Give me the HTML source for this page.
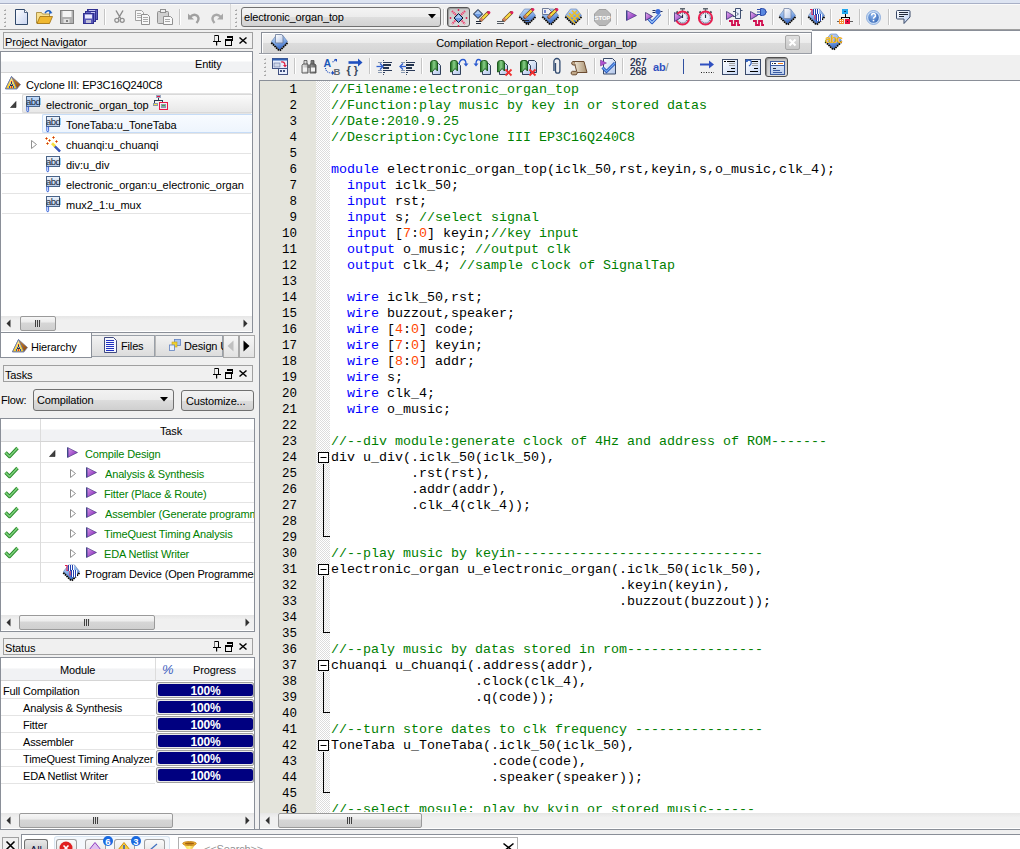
<!DOCTYPE html><html><head><meta charset="utf-8"><style>
*{margin:0;padding:0;box-sizing:border-box}
html,body{width:1020px;height:849px;overflow:hidden;background:#f0f0f0;font-family:"Liberation Sans",sans-serif;font-size:11px;color:#000}
.a{position:absolute}
.t{position:absolute;white-space:pre;line-height:13px;letter-spacing:-0.15px}
svg{position:absolute;overflow:visible}
.ptitle{position:absolute;background:#f0f0f0;border:1px solid #a0a0a0;height:17px}
.hdr{position:absolute;background:linear-gradient(#fff 0,#fff 45%,#f1f2f4 50%,#f1f2f4 100%);border-bottom:1px solid #d5d5d5}
.sep{position:absolute;height:1px;background:#e4e4e4}
.sb{position:absolute;background:linear-gradient(#e9e9e9,#f3f3f3)}
.thumb{position:absolute;border:1px solid #9a9a9a;border-radius:2px;background:linear-gradient(#f6f6f6,#ececec 40%,#d6d6d6 45%,#cfcfcf)}
pre{font-family:"Liberation Mono",monospace;font-size:13.33px;line-height:16px}
.c{color:#008000}.k{color:#0000ff}.n{color:#ff4500}
.g{color:#008000}
</style></head><body>
<div class="a" style="left:0px;top:0px;width:1020px;height:3px;background:#dde4f2"></div>
<div class="a" style="left:0px;top:3px;width:1020px;height:1px;background:#a8b0c6"></div>
<div class="a" style="left:0px;top:4px;width:1020px;height:1px;background:#fbfbfb"></div>
<div class="a" style="left:0px;top:29px;width:1020px;height:1px;background:#a0a0a0"></div>
<div class="ptitle" style="left:3px;top:32px;width:250px"></div>
<div class="t" style="left:5px;top:36px;">Project Navigator</div>
<svg style="left:213px;top:35px" width="8" height="11" viewBox="0 0 8 11"><path d="M1.5 0.5h4v6h-4z" fill="#f0f0f0" stroke="#000" stroke-width="1"/><path d="M1.5 0.5v6" stroke="#777"/><rect x="0" y="6" width="8" height="1" fill="#000"/><rect x="3" y="7" width="1.2" height="3.5" fill="#000"/></svg>
<svg style="left:225px;top:36px" width="8" height="10" viewBox="0 0 8 10"><rect x="2" y="0" width="6" height="2" fill="#000"/><rect x="7" y="2" width="1" height="3" fill="#000"/><rect x="6" y="4" width="2" height="1" fill="#000"/><rect x="0" y="3" width="7" height="2" fill="#000"/><rect x="0" y="5" width="1" height="4" fill="#000"/><rect x="6" y="5" width="1" height="4" fill="#000"/><rect x="0" y="9" width="7" height="1" fill="#000"/></svg>
<svg style="left:239px;top:37px" width="8" height="7" viewBox="0 0 8 7"><path d="M0.5 0.5l7 6M7.5 0.5l-7 6" stroke="#000" stroke-width="1.5"/></svg>
<div class="a" style="left:0px;top:51px;width:253px;height:282px;background:#fff;border-left:1px solid #8a8f98;border-top:1px solid #8a8f98;border-right:1px solid #8a8f98"></div>
<div class="hdr" style="left:1px;top:52px;width:251px;height:21px"></div>
<div class="t" style="left:195px;top:58px;">Entity</div>
<div class="sep" style="left:2px;top:93px;width:249px"></div>
<div class="sep" style="left:2px;top:113px;width:249px"></div>
<div class="sep" style="left:2px;top:133px;width:249px"></div>
<div class="sep" style="left:2px;top:153px;width:249px"></div>
<div class="sep" style="left:2px;top:173px;width:249px"></div>
<div class="sep" style="left:2px;top:193px;width:249px"></div>
<div class="sep" style="left:2px;top:213px;width:249px"></div>
<svg style="left:5px;top:76px" width="17" height="15" viewBox="0 0 17 15"><defs><linearGradient id="gdev2" x1="0" y1="0" x2="1" y2="1"><stop offset="0" stop-color="#f0a030"/><stop offset="1" stop-color="#804010"/></linearGradient><linearGradient id="gdev1" x1="0" y1="0" x2="0" y2="1"><stop offset="0" stop-color="#fff0a0"/><stop offset="1" stop-color="#f8c820"/></linearGradient></defs><path d="M6.5 0.5L15.5 8.5L12 12.8H0.5z" fill="url(#gdev2)" stroke="#6070a0" stroke-width="0.7"/><path d="M6.5 0.5L12 12.8H0.5z" fill="url(#gdev1)" stroke="#5a70b0" stroke-width="0.8"/><g shape-rendering="crispEdges"><rect x="6" y="5" width="1" height="1" fill="#e02030"/><rect x="6" y="6" width="1" height="2" fill="#203080"/><rect x="5" y="8" width="1" height="1" fill="#2050c0"/><rect x="7" y="8" width="1" height="1" fill="#2050c0"/><rect x="4" y="10" width="1" height="2" fill="#2050c0"/><rect x="6" y="10" width="1" height="2" fill="#e02030"/><rect x="8" y="10" width="1" height="2" fill="#2050c0"/><rect x="5" y="9" width="3" height="1" fill="#203060"/></g></svg>
<div class="t" style="left:26px;top:79px;">Cyclone III: EP3C16Q240C8</div>
<div class="a" style="left:22px;top:94px;width:230px;height:19px;background:linear-gradient(#fafafa,#e8e8e8);border:1px solid #d9d9d9;border-right:none;border-radius:2px 0 0 2px"></div>
<svg style="left:10px;top:101px" width="7" height="7" viewBox="0 0 7 7"><path d="M6 0.5L6 6.5L0.5 6.5z" fill="#404040" stroke="#202020" stroke-width="0.6"/></svg>
<svg style="left:26px;top:96px" width="15" height="17" viewBox="0 0 15 17"><defs><linearGradient id="ga1" x1="0" y1="0" x2="0" y2="1"><stop offset="0" stop-color="#c4dcfa"/><stop offset="1" stop-color="#98bcec"/></linearGradient></defs><rect x="0.5" y="0.5" width="13" height="10" fill="url(#ga1)" stroke="#4a6488"/><text x="0" y="9.2" font-family="Liberation Sans" font-size="9.5" fill="#1e2c40" letter-spacing="-0.5">abd</text><path d="M0.8 10.5v4.3l0.9 1.3l0.9-1.3v-4.3" fill="none" stroke="#2a5ad8" stroke-width="0.9"/></svg>
<div class="t" style="left:46px;top:99px;letter-spacing:0">electronic_organ_top</div>
<svg style="left:152px;top:94px" width="17" height="17" viewBox="0 0 17 17"><g shape-rendering="crispEdges"><rect x="4" y="1" width="5" height="3" fill="#9aa8c0"/><rect x="5" y="2" width="3" height="1" fill="#e81848"/><rect x="6" y="4" width="1" height="2" fill="#2a3a50"/><rect x="2" y="6" width="9" height="1" fill="#2a3a50"/><rect x="2" y="7" width="1" height="2" fill="#2a3a50"/><rect x="10" y="7" width="1" height="2" fill="#2a3a50"/><rect x="1" y="9" width="5" height="3" fill="#8a98b0"/><rect x="2" y="10" width="3" height="1" fill="#f8e040"/><rect x="7" y="8" width="9" height="1" fill="#e81848"/><rect x="7" y="15" width="9" height="1" fill="#e81848"/><rect x="7" y="8" width="1" height="8" fill="#e81848"/><rect x="15" y="8" width="1" height="8" fill="#e81848"/><rect x="9" y="10" width="5" height="4" fill="#8a98b0"/><rect x="10" y="11" width="3" height="1" fill="#40b040"/></g></svg>
<div class="a" style="left:42px;top:114px;width:210px;height:19px;background:linear-gradient(#f8fbff,#eef5fd);border:1px solid #c6dcf7;border-right:none;border-radius:2px 0 0 2px"></div>
<svg style="left:46px;top:116px" width="15" height="17" viewBox="0 0 15 17"><defs><linearGradient id="ga0" x1="0" y1="0" x2="0" y2="1"><stop offset="0" stop-color="#eef3fb"/><stop offset="1" stop-color="#b8cce8"/></linearGradient></defs><rect x="0.5" y="0.5" width="13" height="10" fill="url(#ga0)" stroke="#4a6488"/><text x="0" y="9.2" font-family="Liberation Sans" font-size="9.5" fill="#1e2c40" letter-spacing="-0.5">abd</text><path d="M0.8 10.5v4.3l0.9 1.3l0.9-1.3v-4.3" fill="none" stroke="#2a5ad8" stroke-width="0.9"/></svg>
<div class="t" style="left:66px;top:119px;letter-spacing:0">ToneTaba:u_ToneTaba</div>
<svg style="left:31px;top:140px" width="6" height="9" viewBox="0 0 6 9"><path d="M0.5 0.5L5.5 4.5L0.5 8.5z" fill="#fff" stroke="#909090" stroke-width="1"/></svg>
<svg style="left:45px;top:136px" width="17" height="17" viewBox="0 0 17 17"><path d="M9.5 10L15 15.5" stroke="#1a3aa8" stroke-width="2.4"/><path d="M9.5 10L15 15.5" stroke="#b8d0ff" stroke-width="0.8" stroke-dasharray="0.8 0.8"/><path d="M7 7.2L10 10.2" stroke="#f8e040" stroke-width="2.8"/><path d="M0.0 2.5h3M1.5 1.0v3" stroke="#f8a830" stroke-width="1"/><rect x="0.9" y="1.9" width="1.2" height="1.2" fill="#c01040"/><path d="M7.0 1.5h3M8.5 0.0v3" stroke="#f8a830" stroke-width="1"/><rect x="7.9" y="0.9" width="1.2" height="1.2" fill="#c01040"/><path d="M3.0 4.5h3M4.5 3.0v3" stroke="#f8a830" stroke-width="1"/><rect x="3.9" y="3.9" width="1.2" height="1.2" fill="#c01040"/><path d="M1.0 7.5h3M2.5 6.0v3" stroke="#f8a830" stroke-width="1"/><rect x="1.9" y="6.9" width="1.2" height="1.2" fill="#c01040"/><path d="M10.0 5.5h3M11.5 4.0v3" stroke="#f8a830" stroke-width="1"/><rect x="10.9" y="4.9" width="1.2" height="1.2" fill="#c01040"/></svg>
<div class="t" style="left:66px;top:139px;letter-spacing:0">chuanqi:u_chuanqi</div>
<svg style="left:46px;top:156px" width="15" height="17" viewBox="0 0 15 17"><defs><linearGradient id="ga0" x1="0" y1="0" x2="0" y2="1"><stop offset="0" stop-color="#eef3fb"/><stop offset="1" stop-color="#b8cce8"/></linearGradient></defs><rect x="0.5" y="0.5" width="13" height="10" fill="url(#ga0)" stroke="#4a6488"/><text x="0" y="9.2" font-family="Liberation Sans" font-size="9.5" fill="#1e2c40" letter-spacing="-0.5">abd</text><path d="M0.8 10.5v4.3l0.9 1.3l0.9-1.3v-4.3" fill="none" stroke="#2a5ad8" stroke-width="0.9"/></svg>
<div class="t" style="left:66px;top:159px;letter-spacing:0">div:u_div</div>
<svg style="left:46px;top:176px" width="15" height="17" viewBox="0 0 15 17"><defs><linearGradient id="ga0" x1="0" y1="0" x2="0" y2="1"><stop offset="0" stop-color="#eef3fb"/><stop offset="1" stop-color="#b8cce8"/></linearGradient></defs><rect x="0.5" y="0.5" width="13" height="10" fill="url(#ga0)" stroke="#4a6488"/><text x="0" y="9.2" font-family="Liberation Sans" font-size="9.5" fill="#1e2c40" letter-spacing="-0.5">abd</text><path d="M0.8 10.5v4.3l0.9 1.3l0.9-1.3v-4.3" fill="none" stroke="#2a5ad8" stroke-width="0.9"/></svg>
<div class="t" style="left:66px;top:179px;letter-spacing:0">electronic_organ:u_electronic_organ</div>
<svg style="left:46px;top:196px" width="15" height="17" viewBox="0 0 15 17"><defs><linearGradient id="ga0" x1="0" y1="0" x2="0" y2="1"><stop offset="0" stop-color="#eef3fb"/><stop offset="1" stop-color="#b8cce8"/></linearGradient></defs><rect x="0.5" y="0.5" width="13" height="10" fill="url(#ga0)" stroke="#4a6488"/><text x="0" y="9.2" font-family="Liberation Sans" font-size="9.5" fill="#1e2c40" letter-spacing="-0.5">abd</text><path d="M0.8 10.5v4.3l0.9 1.3l0.9-1.3v-4.3" fill="none" stroke="#2a5ad8" stroke-width="0.9"/></svg>
<div class="t" style="left:66px;top:199px;letter-spacing:0">mux2_1:u_mux</div>
<div class="a" style="left:1px;top:316px;width:251px;height:15px;background:linear-gradient(#e6e6e6,#f0f0f0 30%,#f0f0f0)"></div>
<svg style="left:6px;top:319px" width="5" height="9" viewBox="0 0 5 9"><path d="M4.5 0.5L0.5 4.5L4.5 8.5z" fill="#303030"/></svg>
<svg style="left:243px;top:319px" width="5" height="9" viewBox="0 0 5 9"><path d="M0.5 0.5L4.5 4.5L0.5 8.5z" fill="#303030"/></svg>
<div class="thumb" style="left:20px;top:316px;width:36px;height:15px"></div>
<svg style="left:34px;top:320px" width="8" height="7" viewBox="0 0 8 7"><g shape-rendering="crispEdges"><rect x="1" y="0" width="1" height="7" fill="#404040"/><rect x="3" y="0" width="1" height="7" fill="#404040"/><rect x="5" y="0" width="1" height="7" fill="#404040"/><rect x="2" y="0" width="1" height="7" fill="#d8d8d8"/><rect x="4" y="0" width="1" height="7" fill="#d8d8d8"/><rect x="6" y="0" width="1" height="7" fill="#d8d8d8"/></g></svg>
<div class="a" style="left:0px;top:332px;width:253px;height:1px;background:#8a8f98"></div>
<div class="a" style="left:0px;top:333px;width:92px;height:25px;background:#fff;border-left:1px solid #8a8f98;border-bottom:1px solid #8a8f98;border-right:1px solid #8a8f98"></div>
<svg style="left:12px;top:339px" width="17" height="15" viewBox="0 0 17 15"><defs><linearGradient id="gdev2" x1="0" y1="0" x2="1" y2="1"><stop offset="0" stop-color="#f0a030"/><stop offset="1" stop-color="#804010"/></linearGradient><linearGradient id="gdev1" x1="0" y1="0" x2="0" y2="1"><stop offset="0" stop-color="#fff0a0"/><stop offset="1" stop-color="#f8c820"/></linearGradient></defs><path d="M6.5 0.5L15.5 8.5L12 12.8H0.5z" fill="url(#gdev2)" stroke="#6070a0" stroke-width="0.7"/><path d="M6.5 0.5L12 12.8H0.5z" fill="url(#gdev1)" stroke="#5a70b0" stroke-width="0.8"/><g shape-rendering="crispEdges"><rect x="6" y="5" width="1" height="1" fill="#e02030"/><rect x="6" y="6" width="1" height="2" fill="#203080"/><rect x="5" y="8" width="1" height="1" fill="#2050c0"/><rect x="7" y="8" width="1" height="1" fill="#2050c0"/><rect x="4" y="10" width="1" height="2" fill="#2050c0"/><rect x="6" y="10" width="1" height="2" fill="#e02030"/><rect x="8" y="10" width="1" height="2" fill="#2050c0"/><rect x="5" y="9" width="3" height="1" fill="#203060"/></g></svg>
<div class="t" style="left:31px;top:341px;">Hierarchy</div>
<div class="a" style="left:92px;top:335px;width:63px;height:22px;background:linear-gradient(#f2f2f2,#dcdcdc);border:1px solid #9aa0a8;border-left:none"></div>
<svg style="left:104px;top:337px" width="13" height="16" viewBox="0 0 13 16"><path d="M0.5 0.5h9l3 3v12h-12z" fill="#f4f6ff" stroke="#404a80" stroke-width="1"/><g shape-rendering="crispEdges"><rect x="2" y="3" width="8" height="1" fill="#2030c0"/><rect x="2" y="5" width="8" height="1" fill="#2030c0"/><rect x="2" y="7" width="8" height="1" fill="#2030c0"/><rect x="2" y="9" width="8" height="1" fill="#2030c0"/><rect x="2" y="11" width="8" height="1" fill="#2030c0"/><rect x="2" y="13" width="8" height="1" fill="#2030c0"/></g></svg>
<div class="t" style="left:121px;top:340px;">Files</div>
<div class="a" style="left:155px;top:335px;width:68px;height:22px;background:linear-gradient(#f2f2f2,#dcdcdc);border:1px solid #9aa0a8;border-left:1px solid #b8b8b8;overflow:hidden"></div>
<svg style="left:169px;top:339px" width="12" height="12" viewBox="0 0 12 12"><rect x="5.5" y="0.5" width="6" height="6" fill="#a8c4f0" stroke="#6080c0" stroke-width="0.8"/><rect x="3" y="3" width="5" height="5" fill="#f0d030" stroke="#c0a020" stroke-width="0.6"/><rect x="0.5" y="6" width="5" height="5.5" fill="#e8f0fc" stroke="#6080c0" stroke-width="0.8"/></svg>
<div class="t" style="left:184px;top:340px;width:39px;overflow:hidden">Design Units</div>
<div class="a" style="left:223px;top:335px;width:16px;height:23px;background:linear-gradient(#f6f6f6,#e2e2e2);border:1px solid #a8a8a8"></div>
<svg style="left:227px;top:340px" width="7" height="12" viewBox="0 0 7 12"><path d="M6.5 0.5L0.5 6L6.5 11.5z" fill="#c0c0c0"/></svg>
<div class="a" style="left:239px;top:335px;width:16px;height:23px;background:linear-gradient(#f6f6f6,#e2e2e2);border:1px solid #a8a8a8"></div>
<svg style="left:243px;top:340px" width="7" height="12" viewBox="0 0 7 12"><path d="M0.5 0.5L6.5 6L0.5 11.5z" fill="#000"/></svg>
<div class="ptitle" style="left:3px;top:365px;width:250px"></div>
<div class="t" style="left:5px;top:369px;">Tasks</div>
<svg style="left:213px;top:368px" width="8" height="11" viewBox="0 0 8 11"><path d="M1.5 0.5h4v6h-4z" fill="#f0f0f0" stroke="#000" stroke-width="1"/><path d="M1.5 0.5v6" stroke="#777"/><rect x="0" y="6" width="8" height="1" fill="#000"/><rect x="3" y="7" width="1.2" height="3.5" fill="#000"/></svg>
<svg style="left:225px;top:369px" width="8" height="10" viewBox="0 0 8 10"><rect x="2" y="0" width="6" height="2" fill="#000"/><rect x="7" y="2" width="1" height="3" fill="#000"/><rect x="6" y="4" width="2" height="1" fill="#000"/><rect x="0" y="3" width="7" height="2" fill="#000"/><rect x="0" y="5" width="1" height="4" fill="#000"/><rect x="6" y="5" width="1" height="4" fill="#000"/><rect x="0" y="9" width="7" height="1" fill="#000"/></svg>
<svg style="left:239px;top:370px" width="8" height="7" viewBox="0 0 8 7"><path d="M0.5 0.5l7 6M7.5 0.5l-7 6" stroke="#000" stroke-width="1.5"/></svg>
<div class="t" style="left:1px;top:394px;">Flow:</div>
<div class="a" style="left:33px;top:389px;width:141px;height:22px;background:linear-gradient(#f2f2f2 0,#ebebeb 50%,#dddddd 51%,#cfcfcf);border:1px solid #707070;border-radius:3px"></div>
<div class="t" style="left:37px;top:394px;">Compilation</div>
<svg style="left:160px;top:397px" width="8" height="5" viewBox="0 0 8 5"><path d="M0 0h8L4 4.5z" fill="#000"/></svg>
<div class="a" style="left:181px;top:390px;width:73px;height:21px;background:linear-gradient(#f2f2f2 0,#ebebeb 50%,#dddddd 51%,#cfcfcf);border:1px solid #707070;border-radius:3px"></div>
<div class="t" style="left:186px;top:395px;">Customize...</div>
<div class="a" style="left:0px;top:418px;width:255px;height:214px;background:#fff;border:1px solid #8a8f98;border-bottom:none"></div>
<div class="hdr" style="left:1px;top:419px;width:253px;height:23px"></div>
<div class="a" style="left:40px;top:419px;width:1px;height:22px;background:#dcdcdc"></div>
<div class="t" style="left:160px;top:425px;">Task</div>
<div class="sep" style="left:1px;top:462px;width:253px"></div>
<div class="sep" style="left:1px;top:482px;width:253px"></div>
<div class="sep" style="left:1px;top:502px;width:253px"></div>
<div class="sep" style="left:1px;top:522px;width:253px"></div>
<div class="sep" style="left:1px;top:542px;width:253px"></div>
<div class="sep" style="left:1px;top:562px;width:253px"></div>
<div class="sep" style="left:1px;top:582px;width:253px"></div>
<div class="a" style="left:40px;top:442px;width:1px;height:140px;background:#dcdcdc"></div>
<svg style="left:4px;top:446px" width="15" height="13" viewBox="0 0 15 13"><path d="M1.5 6.5L5.5 10.5L13.5 2" fill="none" stroke="#2a8a2a" stroke-width="3.4" stroke-linejoin="round"/><path d="M1.5 6.5L5.5 10.5L13.5 2" fill="none" stroke="#7cd07c" stroke-width="1.6" stroke-linejoin="round"/></svg>
<svg style="left:49px;top:450px" width="7" height="7" viewBox="0 0 7 7"><path d="M6 0.5L6 6.5L0.5 6.5z" fill="#404040" stroke="#202020" stroke-width="0.6"/></svg>
<svg style="left:67px;top:447px" width="11" height="11" viewBox="0 0 11 11"><defs><linearGradient id="gpl" x1="0" y1="0" x2="1" y2="1"><stop offset="0" stop-color="#e0a0f0"/><stop offset="0.6" stop-color="#a050c8"/><stop offset="1" stop-color="#6020a0"/></linearGradient></defs><path d="M0.5 0.5L10.5 5.5L0.5 10.5z" fill="url(#gpl)" stroke="#40307a" stroke-width="0.6"/><path d="M0.8 0.8v9.5" stroke="#304080" stroke-width="1.2"/></svg>
<div class="t g" style="left:85px;top:448px;width:169px;overflow:hidden">Compile Design</div>
<svg style="left:4px;top:466px" width="15" height="13" viewBox="0 0 15 13"><path d="M1.5 6.5L5.5 10.5L13.5 2" fill="none" stroke="#2a8a2a" stroke-width="3.4" stroke-linejoin="round"/><path d="M1.5 6.5L5.5 10.5L13.5 2" fill="none" stroke="#7cd07c" stroke-width="1.6" stroke-linejoin="round"/></svg>
<svg style="left:70px;top:469px" width="6" height="9" viewBox="0 0 6 9"><path d="M0.5 0.5L5.5 4.5L0.5 8.5z" fill="#fff" stroke="#909090" stroke-width="1"/></svg>
<svg style="left:86px;top:467px" width="11" height="11" viewBox="0 0 11 11"><defs><linearGradient id="gpl" x1="0" y1="0" x2="1" y2="1"><stop offset="0" stop-color="#e0a0f0"/><stop offset="0.6" stop-color="#a050c8"/><stop offset="1" stop-color="#6020a0"/></linearGradient></defs><path d="M0.5 0.5L10.5 5.5L0.5 10.5z" fill="url(#gpl)" stroke="#40307a" stroke-width="0.6"/><path d="M0.8 0.8v9.5" stroke="#304080" stroke-width="1.2"/></svg>
<div class="t g" style="left:105px;top:468px;width:149px;overflow:hidden">Analysis &amp; Synthesis</div>
<svg style="left:4px;top:486px" width="15" height="13" viewBox="0 0 15 13"><path d="M1.5 6.5L5.5 10.5L13.5 2" fill="none" stroke="#2a8a2a" stroke-width="3.4" stroke-linejoin="round"/><path d="M1.5 6.5L5.5 10.5L13.5 2" fill="none" stroke="#7cd07c" stroke-width="1.6" stroke-linejoin="round"/></svg>
<svg style="left:70px;top:489px" width="6" height="9" viewBox="0 0 6 9"><path d="M0.5 0.5L5.5 4.5L0.5 8.5z" fill="#fff" stroke="#909090" stroke-width="1"/></svg>
<svg style="left:86px;top:487px" width="11" height="11" viewBox="0 0 11 11"><defs><linearGradient id="gpl" x1="0" y1="0" x2="1" y2="1"><stop offset="0" stop-color="#e0a0f0"/><stop offset="0.6" stop-color="#a050c8"/><stop offset="1" stop-color="#6020a0"/></linearGradient></defs><path d="M0.5 0.5L10.5 5.5L0.5 10.5z" fill="url(#gpl)" stroke="#40307a" stroke-width="0.6"/><path d="M0.8 0.8v9.5" stroke="#304080" stroke-width="1.2"/></svg>
<div class="t g" style="left:104px;top:488px;width:150px;overflow:hidden">Fitter (Place &amp; Route)</div>
<svg style="left:4px;top:506px" width="15" height="13" viewBox="0 0 15 13"><path d="M1.5 6.5L5.5 10.5L13.5 2" fill="none" stroke="#2a8a2a" stroke-width="3.4" stroke-linejoin="round"/><path d="M1.5 6.5L5.5 10.5L13.5 2" fill="none" stroke="#7cd07c" stroke-width="1.6" stroke-linejoin="round"/></svg>
<svg style="left:70px;top:509px" width="6" height="9" viewBox="0 0 6 9"><path d="M0.5 0.5L5.5 4.5L0.5 8.5z" fill="#fff" stroke="#909090" stroke-width="1"/></svg>
<svg style="left:86px;top:507px" width="11" height="11" viewBox="0 0 11 11"><defs><linearGradient id="gpl" x1="0" y1="0" x2="1" y2="1"><stop offset="0" stop-color="#e0a0f0"/><stop offset="0.6" stop-color="#a050c8"/><stop offset="1" stop-color="#6020a0"/></linearGradient></defs><path d="M0.5 0.5L10.5 5.5L0.5 10.5z" fill="url(#gpl)" stroke="#40307a" stroke-width="0.6"/><path d="M0.8 0.8v9.5" stroke="#304080" stroke-width="1.2"/></svg>
<div class="t g" style="left:105px;top:508px;width:149px;overflow:hidden">Assembler (Generate programming files)</div>
<svg style="left:4px;top:526px" width="15" height="13" viewBox="0 0 15 13"><path d="M1.5 6.5L5.5 10.5L13.5 2" fill="none" stroke="#2a8a2a" stroke-width="3.4" stroke-linejoin="round"/><path d="M1.5 6.5L5.5 10.5L13.5 2" fill="none" stroke="#7cd07c" stroke-width="1.6" stroke-linejoin="round"/></svg>
<svg style="left:70px;top:529px" width="6" height="9" viewBox="0 0 6 9"><path d="M0.5 0.5L5.5 4.5L0.5 8.5z" fill="#fff" stroke="#909090" stroke-width="1"/></svg>
<svg style="left:86px;top:527px" width="11" height="11" viewBox="0 0 11 11"><defs><linearGradient id="gpl" x1="0" y1="0" x2="1" y2="1"><stop offset="0" stop-color="#e0a0f0"/><stop offset="0.6" stop-color="#a050c8"/><stop offset="1" stop-color="#6020a0"/></linearGradient></defs><path d="M0.5 0.5L10.5 5.5L0.5 10.5z" fill="url(#gpl)" stroke="#40307a" stroke-width="0.6"/><path d="M0.8 0.8v9.5" stroke="#304080" stroke-width="1.2"/></svg>
<div class="t g" style="left:104px;top:528px;width:150px;overflow:hidden">TimeQuest Timing Analysis</div>
<svg style="left:4px;top:546px" width="15" height="13" viewBox="0 0 15 13"><path d="M1.5 6.5L5.5 10.5L13.5 2" fill="none" stroke="#2a8a2a" stroke-width="3.4" stroke-linejoin="round"/><path d="M1.5 6.5L5.5 10.5L13.5 2" fill="none" stroke="#7cd07c" stroke-width="1.6" stroke-linejoin="round"/></svg>
<svg style="left:70px;top:549px" width="6" height="9" viewBox="0 0 6 9"><path d="M0.5 0.5L5.5 4.5L0.5 8.5z" fill="#fff" stroke="#909090" stroke-width="1"/></svg>
<svg style="left:86px;top:547px" width="11" height="11" viewBox="0 0 11 11"><defs><linearGradient id="gpl" x1="0" y1="0" x2="1" y2="1"><stop offset="0" stop-color="#e0a0f0"/><stop offset="0.6" stop-color="#a050c8"/><stop offset="1" stop-color="#6020a0"/></linearGradient></defs><path d="M0.5 0.5L10.5 5.5L0.5 10.5z" fill="url(#gpl)" stroke="#40307a" stroke-width="0.6"/><path d="M0.8 0.8v9.5" stroke="#304080" stroke-width="1.2"/></svg>
<div class="t g" style="left:104px;top:548px;width:150px;overflow:hidden">EDA Netlist Writer</div>
<svg style="left:63px;top:564px" width="17" height="18" viewBox="0 0 17 18"><defs><linearGradient id="gch" x1="0" y1="0" x2="0.3" y2="1"><stop offset="0" stop-color="#c8dcf6"/><stop offset="0.55" stop-color="#86aee8"/><stop offset="1" stop-color="#3a6ac8"/></linearGradient></defs><path d="M0.5 8.5L8.5 16.5L16.5 8.5" fill="none" stroke="#000" stroke-width="2.4" stroke-dasharray="1.6 0.7"/><path d="M1 8L8.5 15.5L16 8" fill="none" stroke="#101010" stroke-width="1.2"/><path d="M5.5 1h6l5 6.5l-8 8l-8 -8z" fill="url(#gch)" stroke="#5a7ab0" stroke-width="0.6"/><path d="M2 1.5h2v5h3v5" fill="none" stroke="#e02050" stroke-width="1.1"/><g shape-rendering="crispEdges"><rect x="5" y="1" width="6" height="6" fill="#fff"/><rect x="5" y="1" width="1" height="6" fill="#2040b0"/><rect x="7" y="1" width="1" height="6" fill="#2040b0"/><rect x="9" y="1" width="1" height="6" fill="#2040b0"/><rect x="8" y="6" width="6" height="7" fill="#fff"/><rect x="8" y="6" width="1" height="7" fill="#2040b0"/><rect x="10" y="6" width="1" height="7" fill="#2040b0"/><rect x="12" y="6" width="1" height="7" fill="#2040b0"/></g></svg>
<div class="t" style="left:85px;top:568px;width:169px;overflow:hidden">Program Device (Open Programmer)</div>
<div class="a" style="left:1px;top:615px;width:253px;height:15px;background:linear-gradient(#e6e6e6,#f0f0f0 30%,#f0f0f0)"></div>
<svg style="left:6px;top:618px" width="5" height="9" viewBox="0 0 5 9"><path d="M4.5 0.5L0.5 4.5L4.5 8.5z" fill="#303030"/></svg>
<svg style="left:245px;top:618px" width="5" height="9" viewBox="0 0 5 9"><path d="M0.5 0.5L4.5 4.5L0.5 8.5z" fill="#303030"/></svg>
<div class="thumb" style="left:19px;top:615px;width:136px;height:15px"></div>
<svg style="left:83px;top:619px" width="8" height="7" viewBox="0 0 8 7"><g shape-rendering="crispEdges"><rect x="1" y="0" width="1" height="7" fill="#404040"/><rect x="3" y="0" width="1" height="7" fill="#404040"/><rect x="5" y="0" width="1" height="7" fill="#404040"/><rect x="2" y="0" width="1" height="7" fill="#d8d8d8"/><rect x="4" y="0" width="1" height="7" fill="#d8d8d8"/><rect x="6" y="0" width="1" height="7" fill="#d8d8d8"/></g></svg>
<div class="a" style="left:0px;top:631px;width:255px;height:1px;background:#8a8f98"></div>
<div class="ptitle" style="left:3px;top:638px;width:250px"></div>
<div class="t" style="left:5px;top:642px;">Status</div>
<svg style="left:213px;top:641px" width="8" height="11" viewBox="0 0 8 11"><path d="M1.5 0.5h4v6h-4z" fill="#f0f0f0" stroke="#000" stroke-width="1"/><path d="M1.5 0.5v6" stroke="#777"/><rect x="0" y="6" width="8" height="1" fill="#000"/><rect x="3" y="7" width="1.2" height="3.5" fill="#000"/></svg>
<svg style="left:225px;top:642px" width="8" height="10" viewBox="0 0 8 10"><rect x="2" y="0" width="6" height="2" fill="#000"/><rect x="7" y="2" width="1" height="3" fill="#000"/><rect x="6" y="4" width="2" height="1" fill="#000"/><rect x="0" y="3" width="7" height="2" fill="#000"/><rect x="0" y="5" width="1" height="4" fill="#000"/><rect x="6" y="5" width="1" height="4" fill="#000"/><rect x="0" y="9" width="7" height="1" fill="#000"/></svg>
<svg style="left:239px;top:643px" width="8" height="7" viewBox="0 0 8 7"><path d="M0.5 0.5l7 6M7.5 0.5l-7 6" stroke="#000" stroke-width="1.5"/></svg>
<div class="a" style="left:0px;top:657px;width:255px;height:173px;background:#fff;border:1px solid #8a8f98;border-bottom:none"></div>
<div class="hdr" style="left:1px;top:658px;width:253px;height:23px"></div>
<div class="a" style="left:155px;top:658px;width:1px;height:22px;background:#dcdcdc"></div>
<div class="t" style="left:60px;top:664px;">Module</div>
<div class="t" style="left:162px;top:663px;color:#4060c0;font-style:italic;font-size:13px">%</div>
<div class="t" style="left:193px;top:664px;">Progress</div>
<div class="t" style="left:3px;top:685px;">Full Compilation</div>
<div class="sep" style="left:1px;top:698px;width:154px"></div>
<div class="a" style="left:156px;top:682px;width:98px;height:16px;background:#e8e8e8;border:1px solid #a0a0a0;border-radius:2px"></div>
<div class="a" style="left:158px;top:684px;width:95px;height:12px;background:#000080;border-radius:2px"></div>
<div class="t" style="left:158px;top:685px;width:95px;text-align:center;color:#fff;font-weight:bold;font-size:12px;line-height:12px">100%</div>
<div class="t" style="left:23px;top:702px;">Analysis &amp; Synthesis</div>
<div class="sep" style="left:1px;top:715px;width:154px"></div>
<div class="a" style="left:156px;top:699px;width:98px;height:16px;background:#e8e8e8;border:1px solid #a0a0a0;border-radius:2px"></div>
<div class="a" style="left:158px;top:701px;width:95px;height:12px;background:#000080;border-radius:2px"></div>
<div class="t" style="left:158px;top:702px;width:95px;text-align:center;color:#fff;font-weight:bold;font-size:12px;line-height:12px">100%</div>
<div class="t" style="left:23px;top:719px;">Fitter</div>
<div class="sep" style="left:1px;top:732px;width:154px"></div>
<div class="a" style="left:156px;top:716px;width:98px;height:16px;background:#e8e8e8;border:1px solid #a0a0a0;border-radius:2px"></div>
<div class="a" style="left:158px;top:718px;width:95px;height:12px;background:#000080;border-radius:2px"></div>
<div class="t" style="left:158px;top:719px;width:95px;text-align:center;color:#fff;font-weight:bold;font-size:12px;line-height:12px">100%</div>
<div class="t" style="left:23px;top:736px;">Assembler</div>
<div class="sep" style="left:1px;top:749px;width:154px"></div>
<div class="a" style="left:156px;top:733px;width:98px;height:16px;background:#e8e8e8;border:1px solid #a0a0a0;border-radius:2px"></div>
<div class="a" style="left:158px;top:735px;width:95px;height:12px;background:#000080;border-radius:2px"></div>
<div class="t" style="left:158px;top:736px;width:95px;text-align:center;color:#fff;font-weight:bold;font-size:12px;line-height:12px">100%</div>
<div class="t" style="left:23px;top:753px;">TimeQuest Timing Analyzer</div>
<div class="sep" style="left:1px;top:766px;width:154px"></div>
<div class="a" style="left:156px;top:750px;width:98px;height:16px;background:#e8e8e8;border:1px solid #a0a0a0;border-radius:2px"></div>
<div class="a" style="left:158px;top:752px;width:95px;height:12px;background:#000080;border-radius:2px"></div>
<div class="t" style="left:158px;top:753px;width:95px;text-align:center;color:#fff;font-weight:bold;font-size:12px;line-height:12px">100%</div>
<div class="t" style="left:23px;top:770px;">EDA Netlist Writer</div>
<div class="sep" style="left:1px;top:783px;width:154px"></div>
<div class="a" style="left:156px;top:767px;width:98px;height:16px;background:#e8e8e8;border:1px solid #a0a0a0;border-radius:2px"></div>
<div class="a" style="left:158px;top:769px;width:95px;height:12px;background:#000080;border-radius:2px"></div>
<div class="t" style="left:158px;top:770px;width:95px;text-align:center;color:#fff;font-weight:bold;font-size:12px;line-height:12px">100%</div>
<div class="a" style="left:1px;top:813px;width:253px;height:15px;background:linear-gradient(#e6e6e6,#f0f0f0 30%,#f0f0f0)"></div>
<svg style="left:6px;top:816px" width="5" height="9" viewBox="0 0 5 9"><path d="M4.5 0.5L0.5 4.5L4.5 8.5z" fill="#303030"/></svg>
<svg style="left:245px;top:816px" width="5" height="9" viewBox="0 0 5 9"><path d="M0.5 0.5L4.5 4.5L0.5 8.5z" fill="#303030"/></svg>
<div class="thumb" style="left:19px;top:813px;width:154px;height:15px"></div>
<svg style="left:92px;top:817px" width="8" height="7" viewBox="0 0 8 7"><g shape-rendering="crispEdges"><rect x="1" y="0" width="1" height="7" fill="#404040"/><rect x="3" y="0" width="1" height="7" fill="#404040"/><rect x="5" y="0" width="1" height="7" fill="#404040"/><rect x="2" y="0" width="1" height="7" fill="#d8d8d8"/><rect x="4" y="0" width="1" height="7" fill="#d8d8d8"/><rect x="6" y="0" width="1" height="7" fill="#d8d8d8"/></g></svg>
<div class="a" style="left:0px;top:829px;width:1020px;height:1px;background:#8a8f98"></div>
<div class="a" style="left:261px;top:32px;width:551px;height:22px;background:linear-gradient(#f4f4f4 0,#ececec 45%,#dcdcdc 50%,#d4d4d4);border:1px solid #8a8f98;border-bottom:none;box-shadow:inset 1px 1px 0 #fff"></div>
<div class="a" style="left:259px;top:53px;width:553px;height:1px;background:#9a9ea6"></div>
<svg style="left:271px;top:34px" width="17" height="18" viewBox="0 0 17 18"><defs><linearGradient id="gch" x1="0" y1="0" x2="0.3" y2="1"><stop offset="0" stop-color="#c8dcf6"/><stop offset="0.55" stop-color="#86aee8"/><stop offset="1" stop-color="#3a6ac8"/></linearGradient></defs><path d="M0.5 8.5L8.5 16.5L16.5 8.5" fill="none" stroke="#000" stroke-width="2.4" stroke-dasharray="1.6 0.7"/><path d="M1 8L8.5 15.5L16 8" fill="none" stroke="#101010" stroke-width="1.2"/><path d="M5.5 1h6l5 6.5l-8 8l-8 -8z" fill="url(#gch)" stroke="#5a7ab0" stroke-width="0.6"/><defs><linearGradient id="gpg2" x1="0" y1="0" x2="1" y2="1"><stop offset="0" stop-color="#fff"/><stop offset="1" stop-color="#b8c8e8"/></linearGradient></defs><path d="M4.5 0.5h6l1.5 1.5v7h-7.5z" fill="url(#gpg2)" stroke="#6a7a98" stroke-width="0.8"/></svg>
<div class="t" style="left:261px;top:37px;width:551px;text-align:center;font-size:11px">Compilation Report - electronic_organ_top</div>
<div class="a" style="left:785px;top:35px;width:15px;height:15px;background:linear-gradient(#e0e0e0,#c8c8c8);border:1px solid #a8a8a8;border-radius:2px"></div>
<svg style="left:788px;top:38px" width="9" height="9" viewBox="0 0 9 9"><path d="M1.5 1.5l6 6M7.5 1.5l-6 6" stroke="#fff" stroke-width="2"/></svg>
<div class="a" style="left:812px;top:30px;width:208px;height:24px;background:#fff;border-top:1px solid #8a8f98"></div>
<svg style="left:825px;top:33px" width="17" height="17" viewBox="0 0 17 17"><defs><linearGradient id="gch" x1="0" y1="0" x2="0.3" y2="1"><stop offset="0" stop-color="#c8dcf6"/><stop offset="0.55" stop-color="#86aee8"/><stop offset="1" stop-color="#3a6ac8"/></linearGradient></defs><path d="M0.5 8.5L8.5 16.5L16.5 8.5" fill="none" stroke="#000" stroke-width="2.4" stroke-dasharray="1.6 0.7"/><path d="M1 8L8.5 15.5L16 8" fill="none" stroke="#101010" stroke-width="1.2"/><path d="M5.5 1h6l5 6.5l-8 8l-8 -8z" fill="url(#gch)" stroke="#5a7ab0" stroke-width="0.6"/><text x="8.5" y="10" text-anchor="middle" font-family="Liberation Sans" font-size="11.5" font-weight="bold" fill="#f8b818" letter-spacing="-0.9">abc</text></svg>
<div class="a" style="left:259px;top:80px;width:761px;height:749px;background:#fff;border-top:1px solid #8a8f98;border-left:1px solid #8a8f98"></div>
<div class="a" style="left:260px;top:81px;width:56px;height:732px;background:#e4e4dc"></div>
<div class="a" style="left:316px;top:81px;width:14px;height:732px;background-color:#fff;background-image:conic-gradient(#dcdcdc 25%,transparent 0 50%,#dcdcdc 0 75%,transparent 0);background-size:2px 2px"></div>
<pre class="a" style="left:260px;top:82px;width:37px;height:731px;overflow:hidden;text-align:right;font-size:12.5px">1
2
3
4
5
6
7
8
9
10
11
12
13
14
15
16
17
18
19
20
21
22
23
24
25
26
27
28
29
30
31
32
33
34
35
36
37
38
39
40
41
42
43
44
45
46</pre>
<pre class="a" style="left:331px;top:82px;width:689px;height:730px;overflow:hidden;white-space:pre"><span class="c">//Filename:electronic_organ_top</span>
<span class="c">//Function:play music by key in or stored datas</span>
<span class="c">//Date:2010.9.25</span>
<span class="c">//Description:Cyclone III EP3C16Q240C8</span>

<span class="k">module</span> electronic_organ_top(iclk_50,rst,keyin,s,o_music,clk_4);
  <span class="k">input</span> iclk_50;
  <span class="k">input</span> rst;
  <span class="k">input</span> s; <span class="c">//select signal</span>
  <span class="k">input</span> [<span class="n">7</span>:<span class="n">0</span>] keyin;<span class="c">//key input</span>
  <span class="k">output</span> o_music; <span class="c">//output clk</span>
  <span class="k">output</span> clk_4; <span class="c">//sample clock of SignalTap</span>

  <span class="k">wire</span> iclk_50,rst;
  <span class="k">wire</span> buzzout,speaker;
  <span class="k">wire</span> [<span class="n">4</span>:<span class="n">0</span>] code;
  <span class="k">wire</span> [<span class="n">7</span>:<span class="n">0</span>] keyin;
  <span class="k">wire</span> [<span class="n">8</span>:<span class="n">0</span>] addr;
  <span class="k">wire</span> s;
  <span class="k">wire</span> clk_4;
  <span class="k">wire</span> o_music;

<span class="c">//--div module:generate clock of 4Hz and address of ROM-------</span>
div u_div(.iclk_50(iclk_50),
          .rst(rst),
          .addr(addr),
          .clk_4(clk_4));


<span class="c">//--play music by keyin-------------------------------</span>
electronic_organ u_electronic_organ(.iclk_50(iclk_50),
                                    .keyin(keyin),
                                    .buzzout(buzzout));


<span class="c">//--paly music by datas stored in rom-----------------</span>
chuanqi u_chuanqi(.address(addr),
                  .clock(clk_4),
                  .q(code));

<span class="c">//--turn store dates to clk frequency ----------------</span>
ToneTaba u_ToneTaba(.iclk_50(iclk_50),
                    .code(code),
                    .speaker(speaker));

<span class="c">//--select mosule: play by kyin or stored music------</span></pre>
<svg style="left:318px;top:452px" width="11" height="11" viewBox="0 0 11 11"><rect x="0.5" y="0.5" width="10" height="10" fill="#fff" stroke="#000"/><path d="M2.5 5.5h6" stroke="#000"/></svg>
<div class="a" style="left:323px;top:464px;width:1px;height:72px;background:#000"></div>
<div class="a" style="left:323px;top:536px;width:7px;height:1px;background:#000"></div>
<svg style="left:318px;top:564px" width="11" height="11" viewBox="0 0 11 11"><rect x="0.5" y="0.5" width="10" height="10" fill="#fff" stroke="#000"/><path d="M2.5 5.5h6" stroke="#000"/></svg>
<div class="a" style="left:323px;top:576px;width:1px;height:56px;background:#000"></div>
<div class="a" style="left:323px;top:632px;width:7px;height:1px;background:#000"></div>
<svg style="left:318px;top:660px" width="11" height="11" viewBox="0 0 11 11"><rect x="0.5" y="0.5" width="10" height="10" fill="#fff" stroke="#000"/><path d="M2.5 5.5h6" stroke="#000"/></svg>
<div class="a" style="left:323px;top:672px;width:1px;height:40px;background:#000"></div>
<div class="a" style="left:323px;top:712px;width:7px;height:1px;background:#000"></div>
<svg style="left:318px;top:740px" width="11" height="11" viewBox="0 0 11 11"><rect x="0.5" y="0.5" width="10" height="10" fill="#fff" stroke="#000"/><path d="M2.5 5.5h6" stroke="#000"/></svg>
<div class="a" style="left:323px;top:752px;width:1px;height:40px;background:#000"></div>
<div class="a" style="left:323px;top:792px;width:7px;height:1px;background:#000"></div>
<div class="a" style="left:260px;top:813px;width:760px;height:15px;background:linear-gradient(#e6e6e6,#f0f0f0 30%,#f0f0f0)"></div>
<svg style="left:265px;top:816px" width="5" height="9" viewBox="0 0 5 9"><path d="M4.5 0.5L0.5 4.5L4.5 8.5z" fill="#303030"/></svg>
<div class="thumb" style="left:278px;top:813px;width:144px;height:15px"></div>
<svg style="left:346px;top:817px" width="8" height="7" viewBox="0 0 8 7"><g shape-rendering="crispEdges"><rect x="1" y="0" width="1" height="7" fill="#404040"/><rect x="3" y="0" width="1" height="7" fill="#404040"/><rect x="5" y="0" width="1" height="7" fill="#404040"/><rect x="2" y="0" width="1" height="7" fill="#d8d8d8"/><rect x="4" y="0" width="1" height="7" fill="#d8d8d8"/><rect x="6" y="0" width="1" height="7" fill="#d8d8d8"/></g></svg>
<div class="a" style="left:259px;top:829px;width:761px;height:1px;background:#8a8f98"></div>
<div class="a" style="left:21px;top:834px;width:999px;height:15px;background:#fff;border-top:1px solid #8a8f98;border-left:1px solid #8a8f98"></div>
<div class="a" style="left:2px;top:837px;width:17px;height:12px;background:#f0f0f0;border:1px solid #a0a0a0;border-bottom:none"></div>
<svg style="left:6px;top:841px" width="9" height="9" viewBox="0 0 9 9"><path d="M0.5 0.5l8 8M8.5 0.5l-8 8" stroke="#000" stroke-width="1.6"/></svg>
<div class="a" style="left:24px;top:839px;width:24px;height:10px;background:linear-gradient(#e8e8e8,#d0d0d0);border:1px solid #707070;border-bottom:none;border-radius:3px 3px 0 0"></div>
<div class="t" style="left:30px;top:844px;color:#101040;font-size:11px">All</div>
<div class="a" style="left:54px;top:836px;width:116px;height:13px;background:#f4f8fc;border-top:1px solid #d8e4f0;border-left:1px solid #d8e4f0;border-right:1px solid #d8e4f0;border-radius:3px 3px 0 0"></div>
<div class="a" style="left:56px;top:839px;width:21px;height:10px;background:linear-gradient(#fafafa,#ebebeb);border:1px solid #a0a0a0;border-bottom:none;border-radius:3px 3px 0 0"></div>
<div class="a" style="left:85px;top:839px;width:21px;height:10px;background:linear-gradient(#fafafa,#ebebeb);border:1px solid #a0a0a0;border-bottom:none;border-radius:3px 3px 0 0"></div>
<div class="a" style="left:114px;top:839px;width:21px;height:10px;background:linear-gradient(#fafafa,#ebebeb);border:1px solid #a0a0a0;border-bottom:none;border-radius:3px 3px 0 0"></div>
<div class="a" style="left:144px;top:839px;width:21px;height:10px;background:linear-gradient(#fafafa,#ebebeb);border:1px solid #a0a0a0;border-bottom:none;border-radius:3px 3px 0 0"></div>
<svg style="left:59px;top:841px" width="14" height="10" viewBox="0 0 14 10"><circle cx="7" cy="7" r="6.5" fill="#e02020"/><path d="M4.5 4.5l5 5M9.5 4.5l-5 5" stroke="#fff" stroke-width="1.6"/></svg>
<svg style="left:88px;top:842px" width="14" height="8" viewBox="0 0 14 8"><path d="M7 0.5L13 8H1z" fill="#e0c0f0" stroke="#9040c0" stroke-width="1"/></svg>
<svg style="left:117px;top:842px" width="14" height="8" viewBox="0 0 14 8"><path d="M7 0.5L13 8H1z" fill="#f8d040" stroke="#d09010" stroke-width="1"/><path d="M7 3v5" stroke="#2050c0" stroke-width="1.4"/></svg>
<svg style="left:148px;top:843px" width="12" height="7" viewBox="0 0 12 7"><path d="M2 7L9 1" stroke="#4070c0" stroke-width="1.2"/></svg>
<svg style="left:103px;top:836px" width="10" height="10" viewBox="0 0 10 10"><circle cx="5" cy="5" r="5" fill="#1a6ae0"/><text x="5" y="8.6" text-anchor="middle" font-family="Liberation Sans" font-size="9.5" font-weight="bold" fill="#fff">6</text></svg>
<svg style="left:131px;top:836px" width="10" height="10" viewBox="0 0 10 10"><circle cx="5" cy="5" r="5" fill="#1a6ae0"/><text x="5" y="8.6" text-anchor="middle" font-family="Liberation Sans" font-size="9.5" font-weight="bold" fill="#fff">3</text></svg>
<div class="a" style="left:178px;top:837px;width:340px;height:12px;background:#fff;border:1px solid #b0b0b0;border-bottom:none"></div>
<svg style="left:182px;top:841px" width="15" height="9" viewBox="0 0 15 9"><defs><linearGradient id="gfun" x1="0" y1="0" x2="1" y2="0"><stop offset="0" stop-color="#f8d040"/><stop offset="0.5" stop-color="#fff080"/><stop offset="1" stop-color="#e0a020"/></linearGradient></defs><path d="M1 2.5L5.5 9h4L14 2.5z" fill="url(#gfun)"/><ellipse cx="7.5" cy="2.5" rx="6.8" ry="2" fill="#f0b030" stroke="#c08018" stroke-width="0.8"/><ellipse cx="7.5" cy="2.5" rx="4.5" ry="1" fill="#a06010"/></svg>
<div class="t" style="left:204px;top:843px;color:#909090">&lt;&lt;Search&gt;&gt;</div>
<svg style="left:503px;top:843px" width="11" height="7" viewBox="0 0 11 7"><path d="M0.5 0.5l10 8M10.5 0.5l-10 8" stroke="#000" stroke-width="1.6"/></svg>
<svg style="left:4px;top:9px" width="3" height="20" viewBox="0 0 3 20"><g shape-rendering="crispEdges"><rect x="1" y="0" width="1" height="1" fill="#c8c8c8"/><rect x="0" y="1" width="2" height="1" fill="#a8a8a8"/><rect x="1" y="4" width="1" height="1" fill="#c8c8c8"/><rect x="0" y="5" width="2" height="1" fill="#a8a8a8"/><rect x="1" y="8" width="1" height="1" fill="#c8c8c8"/><rect x="0" y="9" width="2" height="1" fill="#a8a8a8"/><rect x="1" y="12" width="1" height="1" fill="#c8c8c8"/><rect x="0" y="13" width="2" height="1" fill="#a8a8a8"/><rect x="1" y="16" width="1" height="1" fill="#c8c8c8"/><rect x="0" y="17" width="2" height="1" fill="#a8a8a8"/></g></svg>
<svg style="left:15px;top:9px" width="13" height="16" viewBox="0 0 13 16"><defs><linearGradient id="gnew" x1="0" y1="0" x2="1" y2="1"><stop offset="0" stop-color="#fff"/><stop offset="1" stop-color="#c8d4f0"/></linearGradient></defs><path d="M0.5 0.5h9l3 3v12h-12z" fill="url(#gnew)" stroke="#30486a" stroke-width="1"/><path d="M9.5 0.5v3h3" fill="#fff" stroke="#30486a" stroke-width="0.8"/></svg>
<svg style="left:36px;top:9px" width="17" height="15" viewBox="0 0 17 15"><path d="M0.5 3.5h5l1 1.5h7v9h-13z" fill="#f8e090" stroke="#a08030" stroke-width="0.8"/><path d="M1 14.5L4 7.5h12.5l-3 7z" fill="#f0b830" stroke="#a07010" stroke-width="0.8"/><path d="M9 4Q12 0 15 3" fill="none" stroke="#2060c0" stroke-width="1.4"/><path d="M13.5 1.5l3 2.5l-3.5 1z" fill="#2060c0"/></svg>
<svg style="left:60px;top:10px" width="14" height="14" viewBox="0 0 14 14"><rect x="0.5" y="0.5" width="13" height="13" fill="#b0b0b0" stroke="#808080"/><rect x="2.5" y="1" width="9" height="6" fill="#f4f4f4"/><rect x="3.5" y="9" width="6" height="4" fill="#e0e0e0"/><rect x="6" y="10" width="2" height="2" fill="#808080"/></svg>
<svg style="left:83px;top:9px" width="15" height="15" viewBox="0 0 15 15"><rect x="4.5" y="0.5" width="10" height="10" fill="#6060c0" stroke="#303090"/><rect x="2.5" y="2.5" width="10" height="10" fill="#6868c8" stroke="#303090"/><rect x="0.5" y="4.5" width="10" height="10" fill="#5a5ab8" stroke="#303090"/><rect x="2" y="5.5" width="7" height="4" fill="#e8e8ff"/><rect x="3" y="11" width="5" height="3" fill="#c0c0d8"/><path d="M6 1.5h6M8 3.5h4" stroke="#e0e0ff" stroke-width="0.8"/></svg>
<div class="a" style="left:104px;top:9px;width:1px;height:16px;background:#c5c5c5"></div>
<div class="a" style="left:105px;top:9px;width:1px;height:16px;background:#fff"></div>
<svg style="left:114px;top:10px" width="11" height="13" viewBox="0 0 11 13"><path d="M2 0.5L7 9M9 0.5L4 9" stroke="#8a8a8a" stroke-width="1.4"/><circle cx="2.8" cy="10.3" r="2" fill="none" stroke="#909090" stroke-width="1.3"/><circle cx="8.2" cy="10.3" r="2" fill="none" stroke="#909090" stroke-width="1.3"/></svg>
<svg style="left:135px;top:10px" width="16" height="15" viewBox="0 0 16 15"><path d="M0.5 0.5h6l2 2v8h-8z" fill="#f8f8f8" stroke="#a0a0a0"/><path d="M6.5 4.5h6l2 2v8h-8z" fill="#f8f8f8" stroke="#909090"/><g shape-rendering="crispEdges"><rect x="2" y="3" width="4" height="1" fill="#b0b0b0"/><rect x="2" y="5" width="4" height="1" fill="#b0b0b0"/><rect x="2" y="7" width="4" height="1" fill="#b0b0b0"/><rect x="8" y="7" width="5" height="1" fill="#a8a8a8"/><rect x="8" y="9" width="5" height="1" fill="#a8a8a8"/><rect x="8" y="11" width="5" height="1" fill="#a8a8a8"/></g></svg>
<svg style="left:157px;top:9px" width="17" height="16" viewBox="0 0 17 16"><rect x="0.5" y="2.5" width="11" height="12" rx="1" fill="#d0d0d0" stroke="#909090"/><rect x="3.5" y="0.5" width="5" height="3" fill="#f0f0f0" stroke="#909090"/><path d="M6.5 7.5h7l2 2v6h-9z" fill="#f8f8f8" stroke="#909090"/><g shape-rendering="crispEdges"><rect x="8" y="10" width="5" height="1" fill="#a8a8a8"/><rect x="8" y="12" width="5" height="1" fill="#a8a8a8"/></g></svg>
<div class="a" style="left:179px;top:9px;width:1px;height:16px;background:#c5c5c5"></div>
<div class="a" style="left:180px;top:9px;width:1px;height:16px;background:#fff"></div>
<svg style="left:188px;top:12px" width="12" height="13" viewBox="0 0 12 13"><path d="M2 5Q6 1 9.5 4Q12 7 8.5 11" fill="none" stroke="#a0a0a0" stroke-width="2.4"/><path d="M0 1.5v6h6z" fill="#a0a0a0"/></svg>
<svg style="left:211px;top:12px" width="12" height="13" viewBox="0 0 12 13"><path d="M10 5Q6 1 2.5 4Q0 7 3.5 11" fill="none" stroke="#a8a8a8" stroke-width="2.4"/><path d="M12 1.5v6h-6z" fill="#a8a8a8"/></svg>
<div class="a" style="left:230px;top:4px;width:1px;height:25px;background:#d8d8d8"></div>
<svg style="left:235px;top:9px" width="3" height="20" viewBox="0 0 3 20"><g shape-rendering="crispEdges"><rect x="1" y="0" width="1" height="1" fill="#c8c8c8"/><rect x="0" y="1" width="2" height="1" fill="#a8a8a8"/><rect x="1" y="4" width="1" height="1" fill="#c8c8c8"/><rect x="0" y="5" width="2" height="1" fill="#a8a8a8"/><rect x="1" y="8" width="1" height="1" fill="#c8c8c8"/><rect x="0" y="9" width="2" height="1" fill="#a8a8a8"/><rect x="1" y="12" width="1" height="1" fill="#c8c8c8"/><rect x="0" y="13" width="2" height="1" fill="#a8a8a8"/><rect x="1" y="16" width="1" height="1" fill="#c8c8c8"/><rect x="0" y="17" width="2" height="1" fill="#a8a8a8"/></g></svg>
<div class="a" style="left:241px;top:7px;width:200px;height:20px;background:linear-gradient(#f4f4f4 0,#ececec 50%,#dedede 51%,#d2d2d2);border:1px solid #707070;border-radius:3px"></div>
<div class="t" style="left:244px;top:11px;">electronic_organ_top</div>
<svg style="left:428px;top:14px" width="8" height="5" viewBox="0 0 8 5"><path d="M0 0h8L4 4.5z" fill="#000"/></svg>
<div class="a" style="left:443px;top:9px;width:1px;height:16px;background:#c5c5c5"></div>
<div class="a" style="left:444px;top:9px;width:1px;height:16px;background:#fff"></div>
<div class="a" style="left:447px;top:7px;width:23px;height:20px;background:linear-gradient(#c8c8c8,#dcdcdc);border:1px solid #555;border-radius:3px;box-shadow:inset 1px 1px 1px #999"></div>
<svg style="left:450px;top:9px" width="17" height="17" viewBox="0 0 17 17"><path d="M2 2L15 15M15 2L2 15" stroke="#f04070" stroke-width="2.2" stroke-dasharray="1.3 0.7"/><path d="M8.5 4.5L13 9L8.5 13.5L4 9z" fill="#6a98e0" stroke="#101828" stroke-width="1"/><path d="M8.5 5.5L12 9H5z" fill="#a8c8f4"/><circle cx="8.5" cy="1" r="0.9" fill="#e02050"/><circle cx="8.5" cy="17" r="0.9" fill="#e02050"/><circle cx="0.5" cy="9" r="0.9" fill="#e02050"/><circle cx="16.5" cy="9" r="0.9" fill="#e02050"/></svg>
<svg style="left:473px;top:8px" width="17" height="18" viewBox="0 0 17 18"><path d="M5 1.5L9.5 6L5 10.5L0.5 6z" fill="#6a98e0" stroke="#101828" stroke-width="1"/><path d="M5 2.5L8.5 6H1.5z" fill="#a8c8f4"/><path d="M8 12L15 5" stroke="#604020" stroke-width="3.6" stroke-linecap="round"/><path d="M8 12L15 5" stroke="#f8d840" stroke-width="2.4"/><path d="M7.5 12.5L9.5 10.5" stroke="#d08060" stroke-width="3"/><circle cx="15.8" cy="4.5" r="1.6" fill="#e02060"/><path d="M3 13.5h5M3 15.5h5" stroke="#202838" stroke-width="1"/></svg>
<svg style="left:496px;top:8px" width="17" height="18" viewBox="0 0 17 18"><path d="M8 12L15 5" stroke="#604020" stroke-width="3.6" stroke-linecap="round"/><path d="M8 12L15 5" stroke="#f8d840" stroke-width="2.4"/><path d="M7.5 12.5L9.5 10.5" stroke="#d08060" stroke-width="3"/><circle cx="15.8" cy="4.5" r="1.6" fill="#e02060"/><path d="M1 13.5h7M1 15.5h7" stroke="#505860" stroke-width="1"/></svg>
<svg style="left:519px;top:8px" width="17" height="18" viewBox="0 0 17 18"><defs><linearGradient id="gch" x1="0" y1="0" x2="0.3" y2="1"><stop offset="0" stop-color="#c8dcf6"/><stop offset="0.55" stop-color="#86aee8"/><stop offset="1" stop-color="#3a6ac8"/></linearGradient></defs><path d="M0.5 8.5L8.5 16.5L16.5 8.5" fill="none" stroke="#000" stroke-width="2.4" stroke-dasharray="1.6 0.7"/><path d="M1 8L8.5 15.5L16 8" fill="none" stroke="#101010" stroke-width="1.2"/><path d="M5.5 1h6l5 6.5l-8 8l-8 -8z" fill="url(#gch)" stroke="#5a7ab0" stroke-width="0.6"/><path d="M6 9L13 2" stroke="#604020" stroke-width="3.6" stroke-linecap="round"/><path d="M6 9L13 2" stroke="#f8d840" stroke-width="2.4"/><path d="M5.5 9.5L7.5 7.5" stroke="#d08060" stroke-width="3"/><circle cx="13.8" cy="1.5" r="1.6" fill="#e02060"/><path d="M5 12.5h5M6 14.5h4" stroke="#202020" stroke-width="0.9"/></svg>
<svg style="left:542px;top:8px" width="17" height="18" viewBox="0 0 17 18"><defs><linearGradient id="gch" x1="0" y1="0" x2="0.3" y2="1"><stop offset="0" stop-color="#c8dcf6"/><stop offset="0.55" stop-color="#86aee8"/><stop offset="1" stop-color="#3a6ac8"/></linearGradient></defs><path d="M0.5 8.5L8.5 16.5L16.5 8.5" fill="none" stroke="#000" stroke-width="2.4" stroke-dasharray="1.6 0.7"/><path d="M1 8L8.5 15.5L16 8" fill="none" stroke="#101010" stroke-width="1.2"/><path d="M5.5 1h6l5 6.5l-8 8l-8 -8z" fill="url(#gch)" stroke="#5a7ab0" stroke-width="0.6"/><path d="M0.5 0.5h6l3 3l-3 3h-6z" fill="#f0f0f4" stroke="#506080" stroke-width="0.8"/><path d="M3 2v3" stroke="#2040c0" stroke-width="1.2"/><path d="M8 4.5h3" stroke="#e02060" stroke-width="1"/><path d="M7 9L14 2" stroke="#604020" stroke-width="3.6" stroke-linecap="round"/><path d="M7 9L14 2" stroke="#f8d840" stroke-width="2.4"/><path d="M6.5 9.5L8.5 7.5" stroke="#d08060" stroke-width="3"/><circle cx="14.8" cy="1.5" r="1.6" fill="#e02060"/></svg>
<svg style="left:565px;top:8px" width="17" height="18" viewBox="0 0 17 18"><defs><linearGradient id="gch" x1="0" y1="0" x2="0.3" y2="1"><stop offset="0" stop-color="#c8dcf6"/><stop offset="0.55" stop-color="#86aee8"/><stop offset="1" stop-color="#3a6ac8"/></linearGradient></defs><path d="M0.5 8.5L8.5 16.5L16.5 8.5" fill="none" stroke="#000" stroke-width="2.4" stroke-dasharray="1.6 0.7"/><path d="M1 8L8.5 15.5L16 8" fill="none" stroke="#101010" stroke-width="1.2"/><path d="M5.5 1h6l5 6.5l-8 8l-8 -8z" fill="url(#gch)" stroke="#5a7ab0" stroke-width="0.6"/><path d="M4 5l8 8M7 2.5l8 8M2 7.5l8 8M12 2.5l-8 8M15 5l-8 8" stroke="#f0c020" stroke-width="1.4"/></svg>
<div class="a" style="left:587px;top:9px;width:1px;height:16px;background:#c5c5c5"></div>
<div class="a" style="left:588px;top:9px;width:1px;height:16px;background:#fff"></div>
<svg style="left:594px;top:9px" width="17" height="17" viewBox="0 0 17 17"><path d="M5 0.5h7l4.5 4.5v7l-4.5 4.5h-7L0.5 12v-7z" fill="#b8b8b8" stroke="#a0a0a0"/><text x="8.5" y="11.3" text-anchor="middle" font-family="Liberation Sans" font-size="6" font-weight="bold" fill="#fff">STOP</text></svg>
<div class="a" style="left:616px;top:9px;width:1px;height:16px;background:#c5c5c5"></div>
<div class="a" style="left:617px;top:9px;width:1px;height:16px;background:#fff"></div>
<svg style="left:626px;top:10px" width="11" height="11" viewBox="0 0 11 11"><defs><linearGradient id="gpl" x1="0" y1="0" x2="1" y2="1"><stop offset="0" stop-color="#e0a0f0"/><stop offset="0.6" stop-color="#a050c8"/><stop offset="1" stop-color="#6020a0"/></linearGradient></defs><path d="M0.5 0.5L10.5 5.5L0.5 10.5z" fill="url(#gpl)" stroke="#40307a" stroke-width="0.6"/><path d="M0.8 0.8v9.5" stroke="#304080" stroke-width="1.2"/></svg>
<svg style="left:645px;top:8px" width="18" height="17" viewBox="0 0 18 17"><defs><linearGradient id="gpl4" x1="0" y1="0" x2="1" y2="1"><stop offset="0" stop-color="#f0b0f8"/><stop offset="1" stop-color="#8030b0"/></linearGradient></defs><path d="M3 10L7 14.5L15 6" fill="none" stroke="#2050c0" stroke-width="3.2" stroke-linejoin="round"/><path d="M3 10L7 14.5L15 6" fill="none" stroke="#9cc4f8" stroke-width="1.3"/><path d="M0.5 4.5L7.5 8.5L0.5 12.5z" fill="url(#gpl4)" stroke="#383070" stroke-width="0.8"/><circle cx="13" cy="3.5" r="2.6" fill="#3a6ad8"/><path d="M7.5 2.5h3M7.5 4.5h3M15.5 3.5h2" stroke="#203060" stroke-width="1"/></svg>
<div class="a" style="left:668px;top:9px;width:1px;height:16px;background:#c5c5c5"></div>
<div class="a" style="left:669px;top:9px;width:1px;height:16px;background:#fff"></div>
<svg style="left:674px;top:8px" width="17" height="18" viewBox="0 0 17 18"><defs><radialGradient id="gsw" cx="0.45" cy="0.4" r="0.6"><stop offset="0" stop-color="#ffffff"/><stop offset="1" stop-color="#c8d4f0"/></radialGradient></defs><path d="M6 0.8h5M8.5 1v2.5" stroke="#606870" stroke-width="1.4"/><path d="M2.5 3.5l1.5 1.5M14.5 3.5l-1.5 1.5" stroke="#404850" stroke-width="1.8"/><circle cx="8.5" cy="10" r="6.6" fill="url(#gsw)" stroke="#e82050" stroke-width="2"/><circle cx="8.5" cy="10" r="4.9" fill="none" stroke="#203040" stroke-width="0.9" stroke-dasharray="0.9 1.3"/><path d="M8.5 10V6.5" stroke="#203040" stroke-width="1.2"/><defs><linearGradient id="gpl3" x1="0" y1="0" x2="1" y2="1"><stop offset="0" stop-color="#f0b0f8"/><stop offset="1" stop-color="#8030b0"/></linearGradient></defs><path d="M0.5 4.5L8 9L0.5 13.5z" fill="url(#gpl3)" stroke="#383070" stroke-width="0.8"/></svg>
<svg style="left:697px;top:8px" width="17" height="18" viewBox="0 0 17 18"><defs><radialGradient id="gsw" cx="0.45" cy="0.4" r="0.6"><stop offset="0" stop-color="#ffffff"/><stop offset="1" stop-color="#c8d4f0"/></radialGradient></defs><path d="M6 0.8h5M8.5 1v2.5" stroke="#606870" stroke-width="1.4"/><path d="M2.5 3.5l1.5 1.5M14.5 3.5l-1.5 1.5" stroke="#404850" stroke-width="1.8"/><circle cx="8.5" cy="10" r="6.6" fill="url(#gsw)" stroke="#e82050" stroke-width="2"/><circle cx="8.5" cy="10" r="4.9" fill="none" stroke="#203040" stroke-width="0.9" stroke-dasharray="0.9 1.3"/><path d="M8.5 10V6.5" stroke="#203040" stroke-width="1.2"/></svg>
<div class="a" style="left:720px;top:9px;width:1px;height:16px;background:#c5c5c5"></div>
<div class="a" style="left:721px;top:9px;width:1px;height:16px;background:#fff"></div>
<svg style="left:726px;top:8px" width="17" height="18" viewBox="0 0 17 18"><defs><linearGradient id="gpl5" x1="0" y1="0" x2="1" y2="1"><stop offset="0" stop-color="#f0b0f8"/><stop offset="1" stop-color="#8030b0"/></linearGradient></defs><path d="M0.5 3.5L7.5 7.5L0.5 11.5z" fill="url(#gpl5)" stroke="#383070" stroke-width="0.8"/><path d="M9.5 0.5h5v10h-5z" fill="#e8f0fc" stroke="#405070" stroke-width="1"/><path d="M7 3.5h2.5M7 8.5h2.5M14.5 2.5h2" stroke="#405070" stroke-width="1"/><path d="M10.5 4.5l2 1.5l-2 1.5" fill="none" stroke="#405070" stroke-width="0.8"/><path d="M3 13h3v4h3v-4h3v4h2" fill="none" stroke="#d01050" stroke-width="1.8"/></svg>
<svg style="left:750px;top:8px" width="17" height="18" viewBox="0 0 17 18"><defs><linearGradient id="gpl5" x1="0" y1="0" x2="1" y2="1"><stop offset="0" stop-color="#f0b0f8"/><stop offset="1" stop-color="#8030b0"/></linearGradient></defs><path d="M0.5 3.5L7.5 7.5L0.5 11.5z" fill="url(#gpl5)" stroke="#383070" stroke-width="0.8"/><path d="M10.5 0.5h2a3.5 3.5 0 0 1 0 7h-2z" fill="#5a88e0" stroke="#2a4aa8" stroke-width="1"/><path d="M7 1.5h3.5M7 4h3.5M7 6.5h3.5M16 4h1" stroke="#2a4aa8" stroke-width="1"/><path d="M3 13h3v4h3v-4h3v4h2" fill="none" stroke="#d01050" stroke-width="1.8"/></svg>
<div class="a" style="left:772px;top:9px;width:1px;height:16px;background:#c5c5c5"></div>
<div class="a" style="left:773px;top:9px;width:1px;height:16px;background:#fff"></div>
<svg style="left:779px;top:8px" width="17" height="18" viewBox="0 0 17 18"><defs><linearGradient id="gch" x1="0" y1="0" x2="0.3" y2="1"><stop offset="0" stop-color="#c8dcf6"/><stop offset="0.55" stop-color="#86aee8"/><stop offset="1" stop-color="#3a6ac8"/></linearGradient></defs><path d="M0.5 8.5L8.5 16.5L16.5 8.5" fill="none" stroke="#000" stroke-width="2.4" stroke-dasharray="1.6 0.7"/><path d="M1 8L8.5 15.5L16 8" fill="none" stroke="#101010" stroke-width="1.2"/><path d="M5.5 1h6l5 6.5l-8 8l-8 -8z" fill="url(#gch)" stroke="#5a7ab0" stroke-width="0.6"/><defs><linearGradient id="gpg" x1="0" y1="0" x2="1" y2="1"><stop offset="0" stop-color="#fff"/><stop offset="1" stop-color="#b8c8e8"/></linearGradient></defs><path d="M5 0.5h5l2 2v8h-7z" fill="url(#gpg)" stroke="#7080a0" stroke-width="0.7"/></svg>
<div class="a" style="left:801px;top:9px;width:1px;height:16px;background:#c5c5c5"></div>
<div class="a" style="left:802px;top:9px;width:1px;height:16px;background:#fff"></div>
<svg style="left:808px;top:8px" width="17" height="18" viewBox="0 0 17 18"><defs><linearGradient id="gch" x1="0" y1="0" x2="0.3" y2="1"><stop offset="0" stop-color="#c8dcf6"/><stop offset="0.55" stop-color="#86aee8"/><stop offset="1" stop-color="#3a6ac8"/></linearGradient></defs><path d="M0.5 8.5L8.5 16.5L16.5 8.5" fill="none" stroke="#000" stroke-width="2.4" stroke-dasharray="1.6 0.7"/><path d="M1 8L8.5 15.5L16 8" fill="none" stroke="#101010" stroke-width="1.2"/><path d="M5.5 1h6l5 6.5l-8 8l-8 -8z" fill="url(#gch)" stroke="#5a7ab0" stroke-width="0.6"/><path d="M2 1.5h2v5h3v5" fill="none" stroke="#e02050" stroke-width="1.1"/><g shape-rendering="crispEdges"><rect x="5" y="1" width="6" height="6" fill="#fff"/><rect x="5" y="1" width="1" height="6" fill="#2040b0"/><rect x="7" y="1" width="1" height="6" fill="#2040b0"/><rect x="9" y="1" width="1" height="6" fill="#2040b0"/><rect x="8" y="6" width="6" height="7" fill="#fff"/><rect x="8" y="6" width="1" height="7" fill="#2040b0"/><rect x="10" y="6" width="1" height="7" fill="#2040b0"/><rect x="12" y="6" width="1" height="7" fill="#2040b0"/></g></svg>
<div class="a" style="left:830px;top:9px;width:1px;height:16px;background:#c5c5c5"></div>
<div class="a" style="left:831px;top:9px;width:1px;height:16px;background:#fff"></div>
<svg style="left:837px;top:9px" width="17" height="16" viewBox="0 0 17 16"><g shape-rendering="crispEdges"><rect x="5" y="0" width="6" height="5" fill="#20a8f0"/><rect x="7" y="2" width="2" height="1" fill="#104080"/><rect x="8" y="5" width="1" height="3" fill="#000"/><rect x="4" y="8" width="9" height="1" fill="#000"/><rect x="4" y="9" width="1" height="2" fill="#000"/><rect x="12" y="9" width="1" height="2" fill="#000"/><rect x="2" y="10" width="5" height="5" fill="#f89030"/><rect x="3" y="11" width="1" height="1" fill="#fff"/><rect x="5" y="11" width="1" height="1" fill="#fff"/><rect x="3" y="13" width="1" height="1" fill="#fff"/><rect x="5" y="13" width="1" height="1" fill="#fff"/><rect x="8" y="10" width="5" height="5" fill="#e81040"/><rect x="10" y="12" width="1" height="1" fill="#202020"/><rect x="0" y="12" width="2" height="1" fill="#606060"/><rect x="13" y="12" width="3" height="1" fill="#606060"/></g></svg>
<div class="a" style="left:859px;top:9px;width:1px;height:16px;background:#c5c5c5"></div>
<div class="a" style="left:860px;top:9px;width:1px;height:16px;background:#fff"></div>
<svg style="left:866px;top:10px" width="16" height="15" viewBox="0 0 16 15"><defs><radialGradient id="ghl" cx="0.4" cy="0.35" r="0.7"><stop offset="0" stop-color="#8ab4ec"/><stop offset="1" stop-color="#3a6ab8"/></radialGradient></defs><circle cx="7.5" cy="7.5" r="7" fill="#c8dcf4" stroke="#7aa0d8" stroke-width="0.8"/><circle cx="7.5" cy="7.5" r="5.3" fill="url(#ghl)"/><path d="M5.5 5.5a2 2 0 1 1 2.8 1.8c-0.6 0.3-0.8 0.7-0.8 1.4" fill="none" stroke="#fff" stroke-width="1.5"/><rect x="6.7" y="9.8" width="1.6" height="1.6" fill="#fff"/></svg>
<div class="a" style="left:888px;top:9px;width:1px;height:16px;background:#c5c5c5"></div>
<div class="a" style="left:889px;top:9px;width:1px;height:16px;background:#fff"></div>
<svg style="left:896px;top:10px" width="15" height="14" viewBox="0 0 15 14"><defs><linearGradient id="gsp" x1="0" y1="0" x2="1" y2="1"><stop offset="0" stop-color="#fff"/><stop offset="1" stop-color="#b8ccf0"/></linearGradient></defs><path d="M1.5 0.5h11.5a1 1 0 0 1 1 1v5.5l-6 6.5v-4.5h-6.5a1 1 0 0 1 -1 -1v-6.5a1 1 0 0 1 1 -1z" fill="url(#gsp)" stroke="#3a4a68" stroke-width="1"/><g shape-rendering="crispEdges"><rect x="3" y="2" width="9" height="1" fill="#202838"/><rect x="3" y="4" width="9" height="1" fill="#202838"/><rect x="3" y="6" width="5" height="1" fill="#202838"/></g></svg>
<svg style="left:264px;top:58px" width="3" height="20" viewBox="0 0 3 20"><g shape-rendering="crispEdges"><rect x="1" y="0" width="1" height="1" fill="#c8c8c8"/><rect x="0" y="1" width="2" height="1" fill="#a8a8a8"/><rect x="1" y="4" width="1" height="1" fill="#c8c8c8"/><rect x="0" y="5" width="2" height="1" fill="#a8a8a8"/><rect x="1" y="8" width="1" height="1" fill="#c8c8c8"/><rect x="0" y="9" width="2" height="1" fill="#a8a8a8"/><rect x="1" y="12" width="1" height="1" fill="#c8c8c8"/><rect x="0" y="13" width="2" height="1" fill="#a8a8a8"/><rect x="1" y="16" width="1" height="1" fill="#c8c8c8"/><rect x="0" y="17" width="2" height="1" fill="#a8a8a8"/></g></svg>
<svg style="left:272px;top:58px" width="17" height="17" viewBox="0 0 17 17"><rect x="0.5" y="0.5" width="15" height="10" fill="#e8eefc" stroke="#405080"/><rect x="0.5" y="0.5" width="15" height="2" fill="#3060b0"/><rect x="2" y="5" width="6" height="4" fill="#d0d8e8" stroke="#6070a0" stroke-width="0.6"/><path d="M9 4Q13 3 13 8" fill="none" stroke="#e02040" stroke-width="1.2"/><path d="M11 7h4l-2 2.5z" fill="#e02040"/><rect x="6.5" y="10.5" width="9" height="6" fill="#e8eefc" stroke="#405080"/><rect x="8" y="12" width="2" height="2" fill="#405080"/><rect x="11" y="12" width="2" height="2" fill="#405080"/></svg>
<div class="a" style="left:294px;top:58px;width:1px;height:16px;background:#c5c5c5"></div>
<div class="a" style="left:295px;top:58px;width:1px;height:16px;background:#fff"></div>
<svg style="left:301px;top:59px" width="16" height="15" viewBox="0 0 16 15"><defs><linearGradient id="gbin" x1="0" y1="0" x2="1" y2="0"><stop offset="0" stop-color="#e8e8e8"/><stop offset="0.5" stop-color="#a8a8a8"/><stop offset="1" stop-color="#606060"/></linearGradient></defs><path d="M3 1.5h3v4h-3zM10 1.5h3v4h-3z" fill="url(#gbin)" stroke="#505050" stroke-width="0.8"/><path d="M1 6.5l1-1.5h5v9h-6zM9 5h5l1 1.5v7.5h-6z" fill="url(#gbin)" stroke="#505050" stroke-width="0.9"/><rect x="6.5" y="6" width="3" height="3" fill="#707070"/><path d="M2 8.5h4v4h-4zM10 8.5h4v4h-4z" fill="#f2f2f2"/></svg>
<svg style="left:324px;top:58px" width="17" height="17" viewBox="0 0 17 17"><text x="-0.5" y="9" font-family="Liberation Sans" font-size="10.5" font-weight="bold" fill="#1a58b8">A</text><text x="9.5" y="16.5" font-family="Liberation Sans" font-size="9.5" font-weight="bold" fill="#606870">B</text><path d="M8.5 4Q11 3 12 1M1.5 10Q2 15 8 15" fill="none" stroke="#2050c0" stroke-width="1.2" stroke-dasharray="1 1"/><path d="M10 1h3v3z" fill="#2050c0"/><path d="M8 12.5l2.5 2.5l-2.5 2z" fill="#2050c0"/></svg>
<svg style="left:347px;top:58px" width="16" height="17" viewBox="0 0 16 17"><text x="-0.5" y="16" font-family="Liberation Sans" font-size="11" font-weight="bold" fill="#3a4a60">{ }</text><path d="M1.5 4.5h10" stroke="#2050c0" stroke-width="2.6"/><path d="M11 0.5l4.5 4l-4.5 4z" fill="#2050c0"/></svg>
<div class="a" style="left:369px;top:58px;width:1px;height:16px;background:#c5c5c5"></div>
<div class="a" style="left:370px;top:58px;width:1px;height:16px;background:#fff"></div>
<svg style="left:376px;top:59px" width="17" height="16" viewBox="0 0 17 16"><g shape-rendering="crispEdges"><rect x="7" y="1" width="1" height="1" fill="#405070"/><rect x="7" y="15" width="1" height="1" fill="#405070"/><rect x="2" y="3" width="4" height="1" fill="#8898b0"/><rect x="7" y="3" width="9" height="1" fill="#2a3a58"/><rect x="7" y="5" width="8" height="2" fill="#23344f"/><rect x="7" y="8" width="6" height="2" fill="#23344f"/><rect x="2" y="11" width="4" height="1" fill="#8898b0"/><rect x="7" y="11" width="9" height="1" fill="#2a3a58"/><rect x="2" y="13" width="4" height="1" fill="#8898b0"/><rect x="7" y="13" width="2" height="1" fill="#2a3a58"/></g><path d="M0.5 7.5h6" stroke="#3060d0" stroke-width="1.3"/><path d="M4 4.5l3 3l-3 3" fill="none" stroke="#3060d0" stroke-width="1.3"/></svg>
<svg style="left:399px;top:59px" width="17" height="16" viewBox="0 0 17 16"><g shape-rendering="crispEdges"><rect x="7" y="1" width="1" height="1" fill="#405070"/><rect x="7" y="15" width="1" height="1" fill="#405070"/><rect x="2" y="3" width="4" height="1" fill="#8898b0"/><rect x="7" y="3" width="9" height="1" fill="#2a3a58"/><rect x="7" y="5" width="8" height="2" fill="#23344f"/><rect x="7" y="8" width="6" height="2" fill="#23344f"/><rect x="2" y="11" width="4" height="1" fill="#8898b0"/><rect x="7" y="11" width="9" height="1" fill="#2a3a58"/><rect x="2" y="13" width="4" height="1" fill="#8898b0"/><rect x="7" y="13" width="2" height="1" fill="#2a3a58"/></g><path d="M1 7.5h6" stroke="#3060d0" stroke-width="1.3"/><path d="M4 4.5l-3 3l3 3" fill="none" stroke="#3060d0" stroke-width="1.3"/></svg>
<div class="a" style="left:421px;top:58px;width:1px;height:16px;background:#c5c5c5"></div>
<div class="a" style="left:422px;top:58px;width:1px;height:16px;background:#fff"></div>
<svg style="left:430px;top:59px" width="18" height="17" viewBox="0 0 18 17"><defs><linearGradient id="gbg" x1="0" y1="0" x2="1" y2="0"><stop offset="0" stop-color="#1a6a1a"/><stop offset="0.5" stop-color="#8ad08a"/><stop offset="1" stop-color="#2a7a2a"/></linearGradient><linearGradient id="gbp" x1="0" y1="0" x2="1" y2="1"><stop offset="0" stop-color="#f4f8ff"/><stop offset="1" stop-color="#b0c4e8"/></linearGradient></defs><path d="M2.5 4.5h6l2 2v9h-8z" fill="url(#gbp)" stroke="#30405a" stroke-width="1"/><path d="M0.5 13V4Q0.5 1.5 3.5 1.5h1.5Q7.5 1.5 7.5 4v8l-2.5-2.5l-2.5 3z" fill="url(#gbg)" stroke="#155015" stroke-width="0.9"/></svg>
<svg style="left:450px;top:59px" width="18" height="17" viewBox="0 0 18 17"><defs><linearGradient id="gbg" x1="0" y1="0" x2="1" y2="0"><stop offset="0" stop-color="#1a6a1a"/><stop offset="0.5" stop-color="#8ad08a"/><stop offset="1" stop-color="#2a7a2a"/></linearGradient><linearGradient id="gbp" x1="0" y1="0" x2="1" y2="1"><stop offset="0" stop-color="#f4f8ff"/><stop offset="1" stop-color="#b0c4e8"/></linearGradient></defs><path d="M2.5 4.5h6l2 2v9h-8z" fill="url(#gbp)" stroke="#30405a" stroke-width="1"/><path d="M0.5 13V4Q0.5 1.5 3.5 1.5h1.5Q7.5 1.5 7.5 4v8l-2.5-2.5l-2.5 3z" fill="url(#gbg)" stroke="#155015" stroke-width="0.9"/><path d="M9 5Q10 0.5 13 0.5Q16 0.5 16 5" fill="none" stroke="#2a5ad0" stroke-width="1.3"/><path d="M13.5 4.5h5l-2.5 3z" fill="#2a5ad0"/></svg>
<svg style="left:474px;top:59px" width="9" height="8" viewBox="0 0 9 8"><path d="M8 5Q7 0.5 4.5 0.5Q2 0.5 2 5" fill="none" stroke="#2a5ad0" stroke-width="1.3"/><path d="M-0.5 4.5h5l-2.5 3z" fill="#2a5ad0"/></svg>
<svg style="left:480px;top:59px" width="18" height="17" viewBox="0 0 18 17"><defs><linearGradient id="gbg" x1="0" y1="0" x2="1" y2="0"><stop offset="0" stop-color="#1a6a1a"/><stop offset="0.5" stop-color="#8ad08a"/><stop offset="1" stop-color="#2a7a2a"/></linearGradient><linearGradient id="gbp" x1="0" y1="0" x2="1" y2="1"><stop offset="0" stop-color="#f4f8ff"/><stop offset="1" stop-color="#b0c4e8"/></linearGradient></defs><path d="M2.5 4.5h6l2 2v9h-8z" fill="url(#gbp)" stroke="#30405a" stroke-width="1"/><path d="M0.5 13V4Q0.5 1.5 3.5 1.5h1.5Q7.5 1.5 7.5 4v8l-2.5-2.5l-2.5 3z" fill="url(#gbg)" stroke="#155015" stroke-width="0.9"/></svg>
<svg style="left:497px;top:59px" width="18" height="17" viewBox="0 0 18 17"><defs><linearGradient id="gbg" x1="0" y1="0" x2="1" y2="0"><stop offset="0" stop-color="#1a6a1a"/><stop offset="0.5" stop-color="#8ad08a"/><stop offset="1" stop-color="#2a7a2a"/></linearGradient><linearGradient id="gbp" x1="0" y1="0" x2="1" y2="1"><stop offset="0" stop-color="#f4f8ff"/><stop offset="1" stop-color="#b0c4e8"/></linearGradient></defs><path d="M2.5 4.5h6l2 2v9h-8z" fill="url(#gbp)" stroke="#30405a" stroke-width="1"/><path d="M0.5 13V4Q0.5 1.5 3.5 1.5h1.5Q7.5 1.5 7.5 4v8l-2.5-2.5l-2.5 3z" fill="url(#gbg)" stroke="#155015" stroke-width="0.9"/><path d="M8.5 10.5l6 6M14.5 10.5l-6 6" stroke="#f03030" stroke-width="1.8"/></svg>
<svg style="left:520px;top:59px" width="18" height="17" viewBox="0 0 18 17"><defs><linearGradient id="gbg" x1="0" y1="0" x2="1" y2="0"><stop offset="0" stop-color="#1a6a1a"/><stop offset="0.5" stop-color="#8ad08a"/><stop offset="1" stop-color="#2a7a2a"/></linearGradient><linearGradient id="gbp" x1="0" y1="0" x2="1" y2="1"><stop offset="0" stop-color="#f4f8ff"/><stop offset="1" stop-color="#b0c4e8"/></linearGradient></defs><path d="M2.5 4.5h6l2 2v9h-8z" fill="url(#gbp)" stroke="#30405a" stroke-width="1"/><path d="M0.5 13V4Q0.5 1.5 3.5 1.5h1.5Q7.5 1.5 7.5 4v8l-2.5-2.5l-2.5 3z" fill="url(#gbg)" stroke="#155015" stroke-width="0.9"/><path d="M8.5 1.5h6l2 2v10h-8z" fill="url(#gbp)" stroke="#30405a" stroke-width="1"/><path d="M2.5 4.5h6l2 2v9h-8z" fill="url(#gbp)" stroke="#30405a" stroke-width="1"/><path d="M0.5 13V4Q0.5 1.5 3.5 1.5h1.5Q7.5 1.5 7.5 4v8l-2.5-2.5l-2.5 3z" fill="url(#gbg)" stroke="#155015" stroke-width="0.9"/><path d="M9.5 10.5l6 6M15.5 10.5l-6 6" stroke="#f03030" stroke-width="1.8"/></svg>
<div class="a" style="left:542px;top:58px;width:1px;height:16px;background:#c5c5c5"></div>
<div class="a" style="left:543px;top:58px;width:1px;height:16px;background:#fff"></div>
<svg style="left:553px;top:58px" width="9" height="17" viewBox="0 0 9 17"><path d="M2.5 5V13a2.2 2.2 0 0 0 4.4 0V3.5a3 3 0 0 0 -6 0V13" fill="none" stroke="#304a70" stroke-width="1.3"/></svg>
<svg style="left:571px;top:59px" width="17" height="16" viewBox="0 0 17 16"><defs><linearGradient id="gscr" x1="0" y1="0" x2="1" y2="0"><stop offset="0" stop-color="#f0e8d8"/><stop offset="1" stop-color="#a89070"/></linearGradient></defs><path d="M3 2.5h10l3 11h-10z" fill="url(#gscr)" stroke="#6a4a30" stroke-width="1"/><path d="M3 2.5a1.8 1.8 0 0 0 -1 3.5h2.5M6 13.5a1.8 1.8 0 0 1 -1 2.3h-3.5a1.8 1.8 0 0 1 0 -3.5h4" fill="#c0a888" stroke="#6a4a30" stroke-width="1"/></svg>
<div class="a" style="left:594px;top:58px;width:1px;height:16px;background:#c5c5c5"></div>
<div class="a" style="left:595px;top:58px;width:1px;height:16px;background:#fff"></div>
<svg style="left:600px;top:58px" width="17" height="17" viewBox="0 0 17 17"><defs><linearGradient id="gck" x1="0" y1="0" x2="1" y2="1"><stop offset="0" stop-color="#fff"/><stop offset="1" stop-color="#b0c4e8"/></linearGradient></defs><path d="M3.5 0.5h9l3 3v12.5h-12z" fill="url(#gck)" stroke="#3a4a68" stroke-width="1"/><path d="M0.5 2L6.5 5L0.5 8z" fill="#b050d0" stroke="#703090" stroke-width="0.5"/><path d="M2.5 9.5L6.5 13.5L15 5" fill="none" stroke="#2050b8" stroke-width="3"/><path d="M2.5 9.5L6.5 13.5L15 5" fill="none" stroke="#70a8f0" stroke-width="1.2"/></svg>
<div class="a" style="left:622px;top:58px;width:1px;height:16px;background:#c5c5c5"></div>
<div class="a" style="left:623px;top:58px;width:1px;height:16px;background:#fff"></div>
<div class="t" style="left:630px;top:59px;font-size:10px;line-height:8.5px;color:#102040;letter-spacing:-0.1px;-webkit-text-stroke:0.2px #102040">267<br>268</div>
<div class="t" style="left:653px;top:61px;font-size:11px;line-height:13px;color:#3050c0;font-weight:bold">ab<span style="color:#707880;font-weight:normal">/</span></div>
<div class="a" style="left:683px;top:59px;width:1px;height:15px;background:#3050a0"></div>
<svg style="left:700px;top:59px" width="15" height="15" viewBox="0 0 15 15"><path d="M0 5.5h10" stroke="#3050c0" stroke-width="2"/><path d="M9 1.5l5 4l-5 4z" fill="#3050c0"/><path d="M1 13.5h13" stroke="#202020" stroke-dasharray="1 1.5"/></svg>
<svg style="left:722px;top:59px" width="17" height="16" viewBox="0 0 17 16"><defs><linearGradient id="gdl" x1="0" y1="0" x2="1" y2="1"><stop offset="0" stop-color="#fff"/><stop offset="1" stop-color="#c8d8f4"/></linearGradient></defs><rect x="0.5" y="0.5" width="15" height="15" fill="url(#gdl)" stroke="#3a4a6a"/><g shape-rendering="crispEdges"><rect x="2" y="2" width="2" height="1" fill="#000"/><rect x="5" y="2" width="8" height="1" fill="#000"/><rect x="7" y="4" width="6" height="1" fill="#a0a0a0"/><rect x="7" y="6" width="6" height="1" fill="#a0a0a0"/><rect x="9" y="9" width="4" height="1" fill="#000"/><rect x="5" y="12" width="8" height="1" fill="#000"/></g></svg>
<svg style="left:745px;top:59px" width="17" height="16" viewBox="0 0 17 16"><rect x="0.5" y="0.5" width="15" height="15" fill="url(#gdl)" stroke="#3a4a6a"/><g shape-rendering="crispEdges"><rect x="6" y="2" width="7" height="1" fill="#000"/><rect x="7" y="4" width="6" height="1" fill="#a0a0a0"/><rect x="7" y="6" width="6" height="1" fill="#a0a0a0"/><rect x="9" y="9" width="4" height="1" fill="#000"/><rect x="5" y="12" width="8" height="1" fill="#000"/></g><path d="M1 3Q3 0 6 2Q7 5 4 7" fill="none" stroke="#3060c0" stroke-width="1.2"/><path d="M0 1l3 -1v3z" fill="#3060c0"/></svg>
<div class="a" style="left:765px;top:57px;width:23px;height:20px;background:linear-gradient(#c4c4c4,#dadada);border:1px solid #505050;border-radius:3px;box-shadow:inset 1px 1px 1px #888"></div>
<svg style="left:770px;top:61px" width="15" height="14" viewBox="0 0 15 14"><defs><linearGradient id="gdl2" x1="0" y1="0" x2="0" y2="1"><stop offset="0" stop-color="#e8f0fc"/><stop offset="1" stop-color="#b8ccec"/></linearGradient></defs><rect x="0.5" y="0.5" width="14" height="13" fill="url(#gdl2)" stroke="#3a5aa0"/><g shape-rendering="crispEdges"><rect x="1" y="1" width="13" height="3" fill="#fff"/><rect x="1" y="4" width="13" height="1" fill="#3a5aa0"/><rect x="2" y="2" width="1" height="1" fill="#202838"/><rect x="4" y="2" width="2" height="1" fill="#202838"/><rect x="8" y="2" width="5" height="1" fill="#f08020"/><rect x="3" y="7" width="3" height="1" fill="#202838"/><rect x="3" y="9" width="7" height="1" fill="#3a5aa0"/><rect x="3" y="11" width="9" height="1" fill="#3a5aa0"/></g></svg>
<div class="a" style="left:259px;top:54px;width:761px;height:1px;background:#fff"></div>
</body></html>
